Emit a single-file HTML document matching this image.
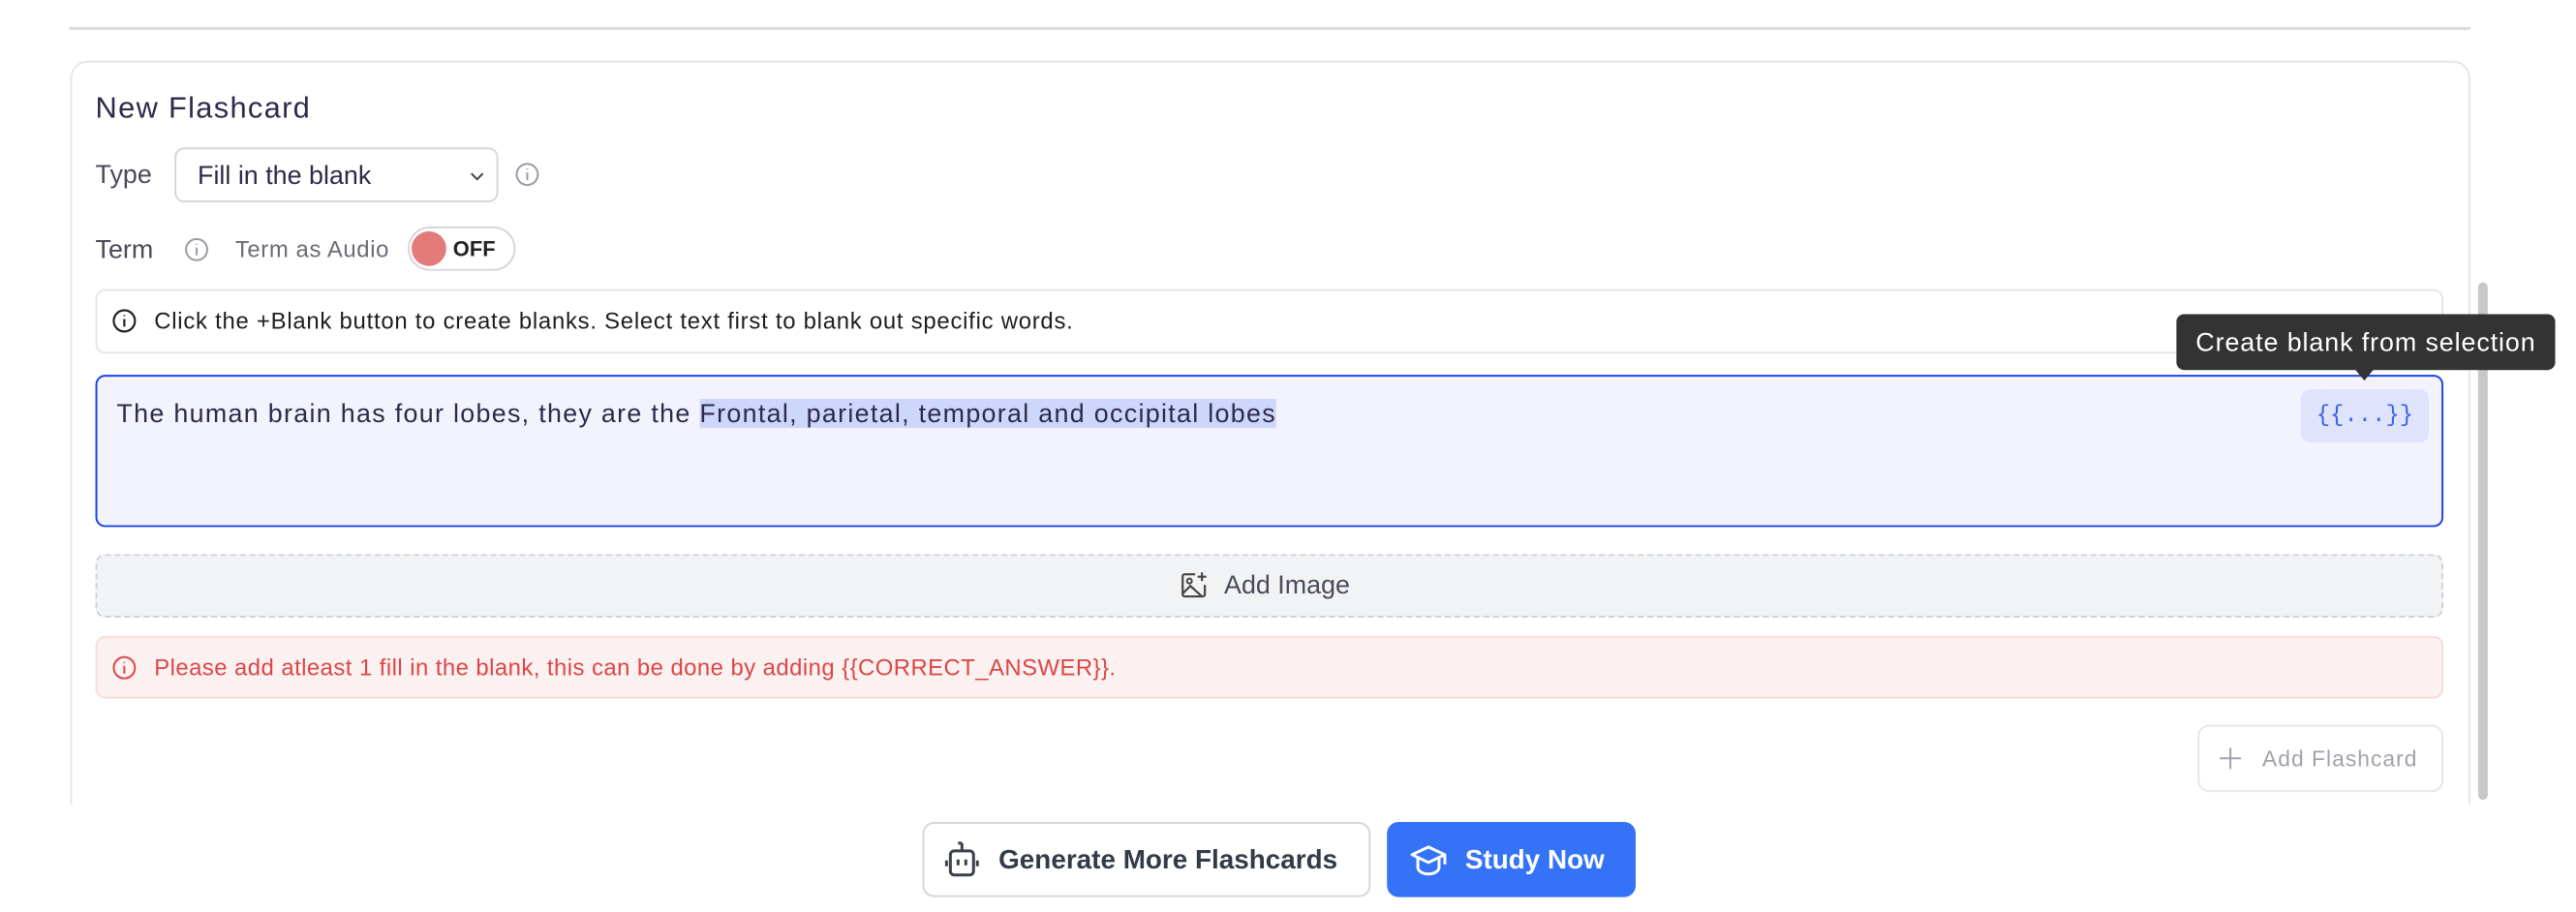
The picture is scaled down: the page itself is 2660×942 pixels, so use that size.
<!DOCTYPE html>
<html><head><meta charset="utf-8"><style>
*{box-sizing:border-box;margin:0;padding:0}
body{width:2660px;height:942px;background:#fff;font-family:"Liberation Sans",sans-serif;position:relative;overflow:hidden;color:#2d2a4a}
#root{position:absolute;left:0;top:0;width:2660px;height:946px;transform:scale(0.9953);transform-origin:0 0}
.a{position:absolute;white-space:nowrap}
.clip{position:absolute;left:0;top:0;width:2660px;height:835px;overflow:hidden}
svg{display:block}
</style></head><body><div id="root">
<div class="a" style="left:72px;top:28px;width:2491px;height:3px;background:#dcdcdf"></div>
<div class="clip">
 <div class="a" style="left:73px;top:63px;width:2490px;height:900px;border:2px solid #e6e7eb;border-radius:18px"></div>
 <div class="a" style="left:99px;top:94px;font-size:31px;letter-spacing:1.3px;color:#2d2a4a">New Flashcard</div>
 <div class="a" style="left:99px;top:166px;font-size:27px;color:#4b4a5a">Type</div>
 <div class="a" style="left:181px;top:153px;width:336px;height:57px;border:2px solid #d6d7dd;border-radius:10px;font-size:27px;padding:12px 0 0 22px;color:#2d2a4a">Fill in the blank
  <svg class="a" style="left:304px;top:22px" width="16" height="12" viewBox="0 0 16 12"><path d="M2 3l6 6 6-6" stroke="#444" stroke-width="2" fill="none"/></svg></div>
 <svg class="a" style="left:534px;top:168px" width="26" height="26" viewBox="0 0 26 26"><circle cx="13" cy="13" r="11" stroke="#9a9aa6" stroke-width="2" fill="none"/><path d="M13 11v8M13 7v1" stroke="#9a9aa6" stroke-width="2"/></svg>
 <div class="a" style="left:99px;top:244px;font-size:27px;color:#4b4a5a">Term</div>
 <svg class="a" style="left:191px;top:246px" width="26" height="26" viewBox="0 0 26 26"><circle cx="13" cy="13" r="11" stroke="#9a9aa6" stroke-width="2" fill="none"/><path d="M13 11v8M13 7v1" stroke="#9a9aa6" stroke-width="2"/></svg>
 <div class="a" style="left:244px;top:246px;font-size:24px;letter-spacing:0.6px;color:#6b6b78">Term as Audio</div>
 <div class="a" style="left:423px;top:235px;width:112px;height:46px;border:2px solid #d6d7dd;border-radius:23px"></div>
 <div class="a" style="left:427px;top:240px;width:36px;height:36px;border-radius:50%;background:#e57a7a"></div>
 <div class="a" style="left:470px;top:246px;font-size:22px;font-weight:bold;color:#222">OFF</div>
 <div class="a" style="left:99px;top:300px;width:2436px;height:67px;border:2px solid #e6e7eb;border-radius:10px"></div>
 <svg class="a" style="left:116px;top:320px" width="26" height="26" viewBox="0 0 26 26"><circle cx="13" cy="13" r="11" stroke="#222" stroke-width="2.2" fill="none"/><path d="M13 11v8M13 7v1" stroke="#222" stroke-width="2.2"/></svg>
 <div class="a" style="left:160px;top:320px;font-size:24px;letter-spacing:0.75px;color:#1e1e1e">Click the +Blank button to create blanks. Select text first to blank out specific words.</div>
 <div class="a" style="left:99px;top:389px;width:2436px;height:158px;border:2px solid #1f44e6;border-radius:10px;background:#f3f3fd"></div>
 <div class="a" style="left:121px;top:412px;font-size:27px;line-height:34px;letter-spacing:1.3px;color:#2d2a4a">The human brain has four lobes, they are the <span style="background:#cdd6fb">Frontal, parietal, temporal and occipital lobes</span></div>
 <div class="a" style="left:2387px;top:404px;width:133px;height:55px;border-radius:10px;background:#dfe3fb;font-family:'Liberation Mono',monospace;font-size:24px;color:#3a64e8;text-align:center;line-height:55px">{{...}}</div>
 <div class="a" style="left:99px;top:575px;width:2436px;height:66px;border:2px dashed #cfd2d8;border-radius:10px;background:#f2f3f5"></div>
 <svg class="a" style="left:1224px;top:592px" width="30" height="30" viewBox="0 0 30 30"><path d="M16 4H5a2 2 0 0 0-2 2v19a2 2 0 0 0 2 2h19a2 2 0 0 0 2-2V15" stroke="#444" stroke-width="2.2" fill="none"/><path d="M23 2v9M18.5 6.5h9" stroke="#444" stroke-width="2.2"/><circle cx="10" cy="11" r="2.5" stroke="#444" stroke-width="2" fill="none"/><path d="M3 24l8-8 12 11" stroke="#444" stroke-width="2.2" fill="none"/></svg>
 <div class="a" style="left:1270px;top:592px;font-size:27px;color:#4b4a5a">Add Image</div>
 <div class="a" style="left:99px;top:660px;width:2436px;height:65px;border:2px solid #f8dcdc;border-radius:10px;background:#fcf1f1"></div>
 <svg class="a" style="left:116px;top:680px" width="26" height="26" viewBox="0 0 26 26"><circle cx="13" cy="13" r="11" stroke="#dc4646" stroke-width="2" fill="none"/><path d="M13 11v8M13 7v1" stroke="#dc4646" stroke-width="2"/></svg>
 <div class="a" style="left:160px;top:680px;font-size:24px;letter-spacing:0.45px;color:#dc4646">Please add atleast 1 fill in the blank, this can be done by adding {{CORRECT_ANSWER}}.</div>
 <div class="a" style="left:2280px;top:752px;width:255px;height:70px;border:2px solid #e6e7eb;border-radius:12px"></div>
 <svg class="a" style="left:2301px;top:774px" width="26" height="26" viewBox="0 0 26 26"><path d="M13 2v22M2 13h22" stroke="#a0a3ab" stroke-width="2"/></svg>
 <div class="a" style="left:2347px;top:774px;font-size:23px;letter-spacing:1px;color:#a0a3ab">Add Flashcard</div>
 <div class="a" style="left:2571px;top:293px;width:10px;height:537px;border-radius:5px;background:#c8c8c8"></div>
 <div class="a" style="left:2258px;top:326px;width:393px;height:58px;border-radius:8px;background:#333;color:#fff;font-size:27px;letter-spacing:0.9px;text-align:center;line-height:58px">Create blank from selection</div>
 <div class="a" style="left:2443px;top:383px;width:0;height:0;border-left:10px solid transparent;border-right:10px solid transparent;border-top:12px solid #333"></div>
</div>
<div class="a" style="left:957px;top:853px;width:465px;height:78px;border:2px solid #d6d7dd;border-radius:12px"></div>
<svg class="a" style="left:980px;top:872px" width="36" height="40" viewBox="0 0 36 40"><path d="M18 3v8M14 3h4" stroke="#3a3f4b" stroke-width="3" fill="none"/><rect x="6" y="11" width="24" height="25" rx="4" stroke="#3a3f4b" stroke-width="3" fill="none"/><path d="M2 21v6M34 21v6M14 20v6M22 20v6" stroke="#3a3f4b" stroke-width="3"/></svg>
<div class="a" style="left:1036px;top:876px;font-size:28px;font-weight:bold;color:#333a48">Generate More Flashcards</div>
<div class="a" style="left:1439px;top:853px;width:258px;height:78px;border-radius:12px;background:#3473f6"></div>
<svg class="a" style="left:1462px;top:875px" width="40" height="36" viewBox="0 0 40 36"><path d="M20 4L3 12l17 8 17-8z" stroke="#fff" stroke-width="3" fill="none" stroke-linejoin="round"/><path d="M9 16v9c0 4 5 7 11 7s11-3 11-7v-9" stroke="#fff" stroke-width="3" fill="none"/><path d="M37 12v10" stroke="#fff" stroke-width="3"/></svg>
<div class="a" style="left:1520px;top:876px;font-size:28px;font-weight:bold;color:#fff">Study Now</div>
</div></body></html>
